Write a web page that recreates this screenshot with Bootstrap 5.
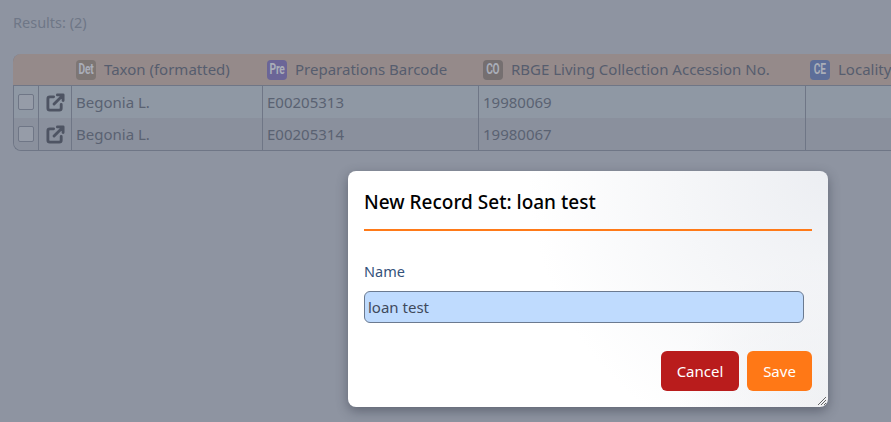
<!DOCTYPE html>
<html lang="en">
<head>
  <meta charset="UTF-8">
  <title>Results</title>
  <meta name="viewport" content="width=device-width, initial-scale=1">
  <link href="https://cdn.jsdelivr.net/npm/bootstrap@5.3.2/dist/css/bootstrap.min.css" rel="stylesheet">
  <style>
    html, body { height: 100%; }
    body {
      background: #8e94a1;
      font-family: "Noto Sans", "Open Sans", sans-serif;
      font-size: 15px;
      overflow: hidden;
    }
    .page-wrap { padding: 11px 0 0 13px; width: 891px; overflow: hidden; }
    .results-label { color: #6f7787; font-size: 14.5px; line-height: 22px; margin-bottom: 21px; }

    .res-table { display: grid; grid-template-columns: 25px 33px 191px 216px 327px 300px; width: 1092px; border-bottom: 1px solid #6f7686; border-left: 1px solid #6f7686; border-radius: 8px 0 0 8px; color: #5a6272; }
    .res-head { background: #958a8a; height: 32px; border-bottom: 1px solid #6f7686; color: #565d6e; margin-left: -1px; padding-left: 5px; white-space: nowrap; }
    .res-head:first-child { border-top-left-radius: 8px; }
    .res-cell { height: 32px; border-right: 1px solid #6f7686; padding-left: 4px; white-space: nowrap; }
    .row-a { background: #8f98a4; }
    .row-b { background: #8a909d; height: 32px; }
    .row-b.first { border-bottom-left-radius: 8px; }

    .tag { width: 20px; height: 20px; border-radius: 4px; color: #a9adb8; font-family: "Roboto", sans-serif; font-weight: 700; font-size: 15px; }
    .tag span { display: inline-block; transform: scaleX(.68); letter-spacing: -.3px; }
    .tag-det { background: #7d7674; }
    .tag-pre { background: #6b6597; }
    .tag-co { background: #756f70; }
    .tag-ce { background: #5d6e99; }

    .fake-check { width: 16px; height: 16px; border: 1px solid #6f7686; border-radius: 2px; background: #969ca8; }
    .open-ico { width: 19px; height: 19px; color: #4e5463; }

    .rs-dialog {
      position: absolute; left: 348px; top: 171px; width: 480px; height: 236px;
      padding: 16px; border-radius: 8px; color: #1d3557;
      background:
        radial-gradient(circle at 100% 0, #eceef2 0, rgba(255,255,255,0) 300px),
        radial-gradient(circle at 100% 100%, #f0f1f4 0, rgba(255,255,255,0) 150px),
        #fff;
      box-shadow: 0 4px 12px rgba(40, 45, 60, .45);
    }
    .rs-title { color: #000; font-size: 19px; font-weight: 500; line-height: 30px; padding-bottom: 12px; border-bottom: 2px solid #ff7a18; margin-bottom: 30px; }
    .rs-label { color: #34527a; font-size: 14.5px; line-height: 20px; margin-bottom: 10px; }
    .rs-input { width: 440px; height: 32px; padding: 0 3px; background: #bfdbfe; border: 1px solid #6b7a90; border-radius: 6px; color: #3f4a5c; font-size: 15px; font-family: inherit; display: block; }
    .rs-foot { margin-top: 28px; }
    .rs-btn { height: 40px; border-radius: 6px; color: #fff; font-size: 15px; border: 0; padding: 0; }
    .rs-cancel { background: #b91c1c; width: 78px; }
    .rs-cancel:hover { background: #b91c1c; color: #fff; }
    .rs-save { background: #ff7816; width: 65px; }
    .rs-save:hover { background: #ff7816; color: #fff; }
    .rs-grip { position: absolute; right: 1px; bottom: 1px; width: 10px; height: 10px; }
  </style>
</head>
<body>

<div class="page-wrap">
  <div class="results-label">Results: (2)</div>

  <div class="res-table">
    <div class="res-head"></div>
    <div class="res-head"></div>
    <div class="res-head d-flex align-items-center gap-2"><div class="tag tag-det d-flex align-items-center justify-content-center"><span>Det</span></div>Taxon (formatted)</div>
    <div class="res-head d-flex align-items-center gap-2"><div class="tag tag-pre d-flex align-items-center justify-content-center"><span>Pre</span></div>Preparations Barcode</div>
    <div class="res-head d-flex align-items-center gap-2"><div class="tag tag-co d-flex align-items-center justify-content-center"><span>CO</span></div>RBGE Living Collection Accession No.</div>
    <div class="res-head d-flex align-items-center gap-2"><div class="tag tag-ce d-flex align-items-center justify-content-center"><span>CE</span></div>Locality</div>

    <div class="res-cell row-a d-flex align-items-center"><div class="fake-check"></div></div>
    <div class="res-cell row-a d-flex align-items-center justify-content-center ps-0">
      <svg class="open-ico" viewBox="0 0 20 20" fill="none" stroke="currentColor" stroke-width="3" stroke-linecap="round" stroke-linejoin="round"><path d="M8 4H4a2 2 0 0 0-2 2v10a2 2 0 0 0 2 2h10a2 2 0 0 0 2-2v-4"/><path d="M12 2h6v6M18 2 8.5 11.5"/></svg>
    </div>
    <div class="res-cell row-a d-flex align-items-center">Begonia L.</div>
    <div class="res-cell row-a d-flex align-items-center">E00205313</div>
    <div class="res-cell row-a d-flex align-items-center">19980069</div>
    <div class="res-cell row-a"></div>

    <div class="res-cell row-b first d-flex align-items-center"><div class="fake-check"></div></div>
    <div class="res-cell row-b d-flex align-items-center justify-content-center ps-0">
      <svg class="open-ico" viewBox="0 0 20 20" fill="none" stroke="currentColor" stroke-width="3" stroke-linecap="round" stroke-linejoin="round"><path d="M8 4H4a2 2 0 0 0-2 2v10a2 2 0 0 0 2 2h10a2 2 0 0 0 2-2v-4"/><path d="M12 2h6v6M18 2 8.5 11.5"/></svg>
    </div>
    <div class="res-cell row-b d-flex align-items-center">Begonia L.</div>
    <div class="res-cell row-b d-flex align-items-center">E00205314</div>
    <div class="res-cell row-b d-flex align-items-center">19980067</div>
    <div class="res-cell row-b"></div>
  </div>
</div>

<div class="rs-dialog">
  <div class="rs-title">New Record Set: loan test</div>
  <div class="rs-label">Name</div>
  <input class="rs-input" type="text" value="loan test">
  <div class="rs-foot d-flex justify-content-end gap-2">
    <button class="btn rs-btn rs-cancel" type="button">Cancel</button>
    <button class="btn rs-btn rs-save" type="button">Save</button>
  </div>
  <svg class="rs-grip" viewBox="0 0 10 10" stroke="#666" stroke-width="1"><path d="M1 9 9 1M4 9l5-5M7 9l2-2"/></svg>
</div>

<script src="https://cdn.jsdelivr.net/npm/bootstrap@5.3.2/dist/js/bootstrap.bundle.min.js"></script>
</body>
</html>
